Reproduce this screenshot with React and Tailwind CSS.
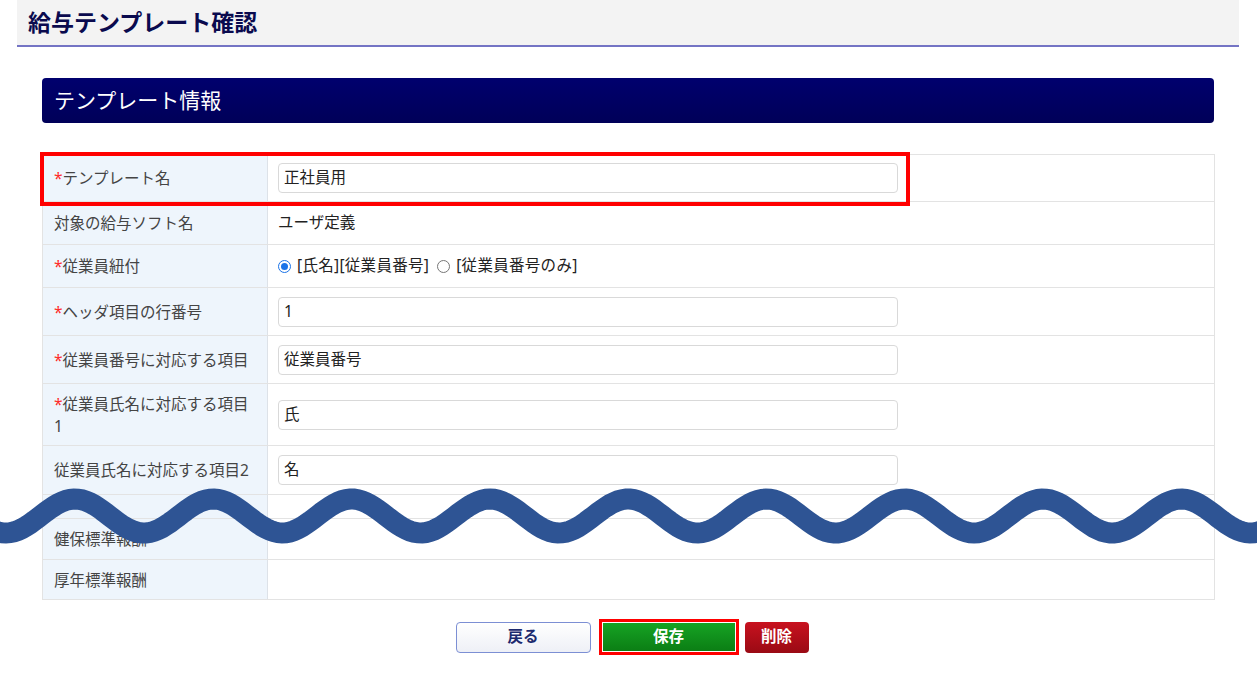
import React from 'react';

const rows = [
  { label: 'テンプレート名', req: true, type: 'input', value: '正社員用', h: 'h-[47px]' },
  { label: '対象の給与ソフト名', type: 'text', value: 'ユーザ定義', h: 'h-[43px]' },
  { label: '従業員紐付', req: true, type: 'radio', h: 'h-[43px]' },
  { label: 'ヘッダ項目の行番号', req: true, type: 'input', value: '1', h: 'h-[48px]' },
  { label: '従業員番号に対応する項目', req: true, type: 'input', value: '従業員番号', h: 'h-[48px]' },
  { label: '従業員氏名に対応する項目', tail: '1', req: true, type: 'input', value: '氏', h: 'h-[62px]' },
  { label: '従業員氏名に対応する項目2', type: 'input', value: '名', h: 'h-[49px]' },
  { label: '', type: 'empty', h: 'h-[24px]' },
  { label: '健保標準報酬', type: 'empty', h: 'h-[41px]' },
  { label: '厚年標準報酬', type: 'empty', h: 'h-[40px]' },
];

const Radio = ({ checked }) => (
  <span
    className={
      'inline-flex w-[13px] h-[13px] rounded-full border items-center justify-center bg-white ' +
      (checked ? 'border-[#1a73e8]' : 'border-[#767676]')
    }
  >
    {checked && <span className="w-[7px] h-[7px] rounded-full bg-[#1a73e8]" />}
  </span>
);

const Wave = () => {
  const pts = [];
  for (let x = -10; x <= 1270; x += 4) {
    const y = 516 - 17 * Math.cos((2 * Math.PI * (x - 75)) / 138.3);
    pts.push(`${x === -10 ? 'M' : 'L'}${x},${y.toFixed(2)}`);
  }
  return (
    <svg
      className="absolute left-0 top-0 pointer-events-none"
      width="1257"
      height="682"
      viewBox="0 0 1257 682"
    >
      <path
        d={pts.join(' ')}
        fill="none"
        stroke="#2e5494"
        strokeWidth="21"
        strokeLinecap="butt"
      />
    </svg>
  );
};

const Cell = ({ row }) => {
  if (row.type === 'input') {
    return (
      <div className="w-[620px] h-[30px] border border-[#d9d9d9] rounded-[4px] bg-white flex items-center px-[5px] text-[15.5px] text-[#222]">
        {row.value}
      </div>
    );
  }
  if (row.type === 'text') {
    return <span className="text-[15.5px] text-[#222]">{row.value}</span>;
  }
  if (row.type === 'radio') {
    return (
      <div className="flex items-center text-[15.5px] text-[#222]">
        <Radio checked />
        <span className="ml-[6px] tracking-[0.3px]">[氏名][従業員番号]</span>
        <span className="ml-[8px] flex"><Radio /></span>
        <span className="ml-[6px] tracking-[0.3px]">[従業員番号のみ]</span>
      </div>
    );
  }
  return null;
};

export default function App() {
  return (
    <div className="relative w-[1257px] min-h-[682px] bg-white font-['Noto_Sans','Noto_Sans_CJK_JP',sans-serif]">
      <div className="ml-[17px] w-[1222px]">
        <div className="h-[47px] bg-[#f3f3f3] border-b-2 border-[#7474c4] flex items-center pl-[11px]">
          <h1 className="text-[23px] font-bold text-[#0a0a4e] leading-none">給与テンプレート確認</h1>
        </div>

        <div className="px-[25px] pt-[31px]">
          <div className="h-[45px] rounded-[4px] bg-gradient-to-b from-[#00006e] to-[#000058] flex items-center pl-[12px]">
            <h2 className="text-[21px] text-white leading-none">テンプレート情報</h2>
          </div>

          <div className="relative mt-[31px] border border-[#e3e3e3] border-b-0 w-[1173px]">
            {rows.map((row, i) => (
              <div key={i} className={'flex border-b border-[#e3e3e3] ' + row.h}>
                <div className="w-[225px] shrink-0 bg-[#eef5fc] border-r border-[#dde2e8] flex items-center pl-[11px] pr-[11px] text-[15.5px] leading-[22px] text-[#444]">
                  <span>
                    {row.req && <span className="text-[#ff2a2a]">*</span>}
                    {row.label}
                    {row.tail && (
                      <>
                        <br />
                        {row.tail}
                      </>
                    )}
                  </span>
                </div>
                <div className="flex-1 flex items-center pl-[10px]">
                  <Cell row={row} />
                </div>
              </div>
            ))}
            <div className="absolute left-[-3px] top-[-3px] w-[870px] h-[54px] border-[4px] border-[#ff0000] pointer-events-none" />
          </div>

          <div className="flex justify-center items-center pt-[19px] pl-[8px]">
            <button className="w-[135px] h-[31px] rounded-[4px] border border-[#7c8fd4] bg-gradient-to-b from-white to-[#eef0f6] text-[15.5px] font-bold text-[#1c2a6e]">
              戻る
            </button>
            <div className="ml-[8px] border-[3px] border-[#ff0000] p-px">
              <button className="block w-[132px] h-[28px] bg-gradient-to-b from-[#16a324] to-[#0b7e14] text-[15.5px] font-bold text-white">
                保存
              </button>
            </div>
            <button className="ml-[6px] w-[64px] h-[31px] rounded-[4px] bg-gradient-to-b from-[#c8121f] to-[#9a0a14] text-[15.5px] font-bold text-white">
              削除
            </button>
          </div>
        </div>
      </div>
      <Wave />
    </div>
  );
}
